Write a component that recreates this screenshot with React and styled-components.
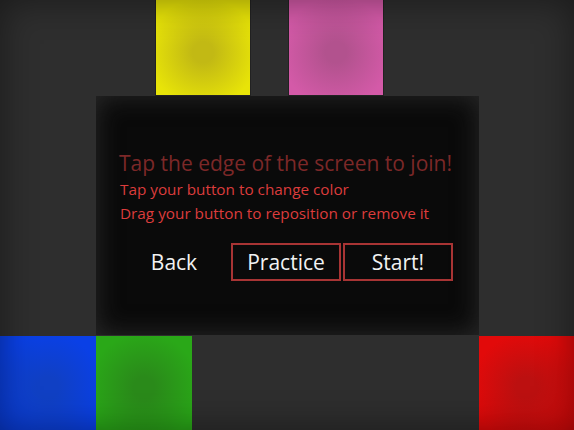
import { createGlobalStyle, styled } from "styled-components"

const Global = createGlobalStyle`
    html, body {
        margin: 0;
        padding: 0;
        background: #2e2e2e;
        overflow: hidden;
    }
    body {
        font-family: "Open Sans", "Liberation Sans", sans-serif;
    }
`

const Screen = styled.div`
    position: relative;
    width: 574px;
    height: 430px;
    background-color: #2e2e2e;
    display: flex;
    flex-direction: column;
    overflow: hidden;

    &::after{
        content: "";
        position: absolute;
        inset: 0;
        pointer-events: none;
        box-shadow: inset 0 0 36px rgba(0,0,0,.45);
    }
`

const TopRow = styled.div`
    height: 96px;
    display: flex;
    gap: 37px;
    padding-left: 155px;
`

const MiddleRow = styled.div`
    height: 239px;
    display: flex;
    padding-left: 96px;
`

const BottomRow = styled.div`
    flex: 1;
    display: flex;
    padding-top: 1px;
`

const Spacer = styled.div`
    flex: 1;
`

const Tile = styled.div`
    width: ${p => p.$w || 96}px;
    height: 100%;
    box-sizing: border-box;
    background: radial-gradient(circle at 50% 55%, ${p => p.$center} 0%, ${p => p.$center} 15%, ${p => p.$edge} 78%);
    border: ${p => p.$outline ? "1px solid #222" : "none"};
    border-top: none;
`

const Panel = styled.div`
    width: 383px;
    height: 100%;
    box-sizing: border-box;
    background-color: #0a0a0a;
    box-shadow: inset 0 0 26px rgba(46,46,46,.9);
    padding: 53px 0 0 24px;
    display: flex;
    flex-direction: column;
`

const Title = styled.div`
    font-size: 21px;
    line-height: 28px;
    color: #7c2828;
    margin-left: -1px;
`

const Hint = styled.div`
    font-size: 15.3px;
    line-height: 24px;
    color: #dc3c3c;
`

const ButtonRow = styled.div`
    display: flex;
    gap: 2px;
    margin-top: 18px;
    margin-left: -1px;
`

const Button = styled.div`
    width: 110px;
    height: 38px;
    box-sizing: border-box;
    display: flex;
    align-items: center;
    justify-content: center;
    font-size: 21px;
    color: #f2f2f2;
    border: 2px solid ${p => p.$framed ? "#a83434" : "transparent"};
`

export default function App() {
    return (
        <>
            <Global />
            <Screen>
                <TopRow>
                    <Tile $edge="#e8e408" $center="#c2b914" $outline />
                    <Tile $edge="#d45aa8" $center="#b2528e" $outline />
                </TopRow>

                <MiddleRow>
                    <Panel>
                        <Title>Tap the edge of the screen to join!</Title>
                        <Hint>Tap your button to change color</Hint>
                        <Hint>Drag your button to reposition or remove it</Hint>

                        <ButtonRow>
                            <Button>Back</Button>
                            <Button $framed>Practice</Button>
                            <Button $framed>Start!</Button>
                        </ButtonRow>
                    </Panel>
                </MiddleRow>

                <BottomRow>
                    <Tile $edge="#0a40e6" $center="#1040c4" />
                    <Tile $edge="#2aa818" $center="#2a8a1a" />
                    <Spacer />
                    <Tile $w={95} $edge="#e20a0a" $center="#bc1010" />
                </BottomRow>
            </Screen>
        </>
    )
}
